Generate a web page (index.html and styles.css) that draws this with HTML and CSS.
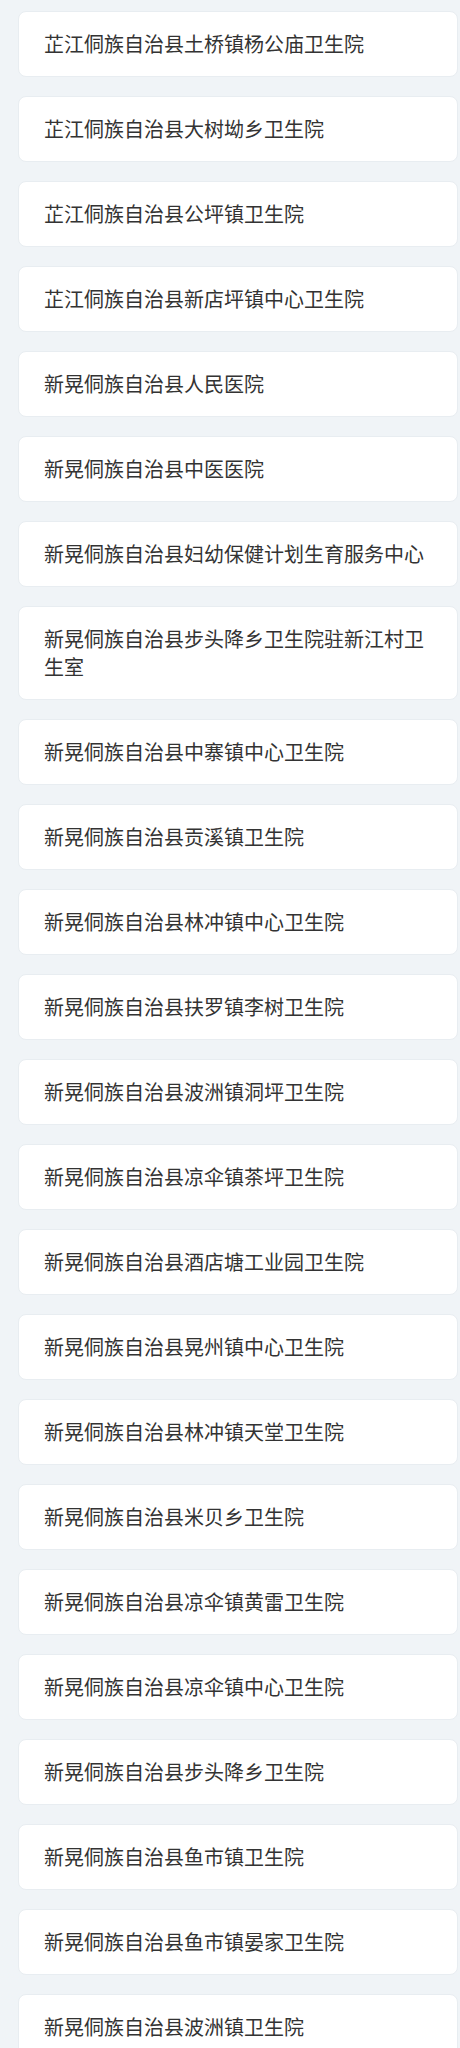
FILE: index.html
```html
<!DOCTYPE html>
<html lang="zh-CN">
<head>
<meta charset="utf-8">
<link rel="stylesheet" href="styles.css">
</head>
<body>
<ul class="list">
  <li class="card">芷江侗族自治县土桥镇杨公庙卫生院</li>
  <li class="card">芷江侗族自治县大树坳乡卫生院</li>
  <li class="card">芷江侗族自治县公坪镇卫生院</li>
  <li class="card">芷江侗族自治县新店坪镇中心卫生院</li>
  <li class="card">新晃侗族自治县人民医院</li>
  <li class="card">新晃侗族自治县中医医院</li>
  <li class="card">新晃侗族自治县妇幼保健计划生育服务中心</li>
  <li class="card">新晃侗族自治县步头降乡卫生院驻新江村卫生室</li>
  <li class="card">新晃侗族自治县中寨镇中心卫生院</li>
  <li class="card">新晃侗族自治县贡溪镇卫生院</li>
  <li class="card">新晃侗族自治县林冲镇中心卫生院</li>
  <li class="card">新晃侗族自治县扶罗镇李树卫生院</li>
  <li class="card">新晃侗族自治县波洲镇洞坪卫生院</li>
  <li class="card">新晃侗族自治县凉伞镇茶坪卫生院</li>
  <li class="card">新晃侗族自治县酒店塘工业园卫生院</li>
  <li class="card">新晃侗族自治县晃州镇中心卫生院</li>
  <li class="card">新晃侗族自治县林冲镇天堂卫生院</li>
  <li class="card">新晃侗族自治县米贝乡卫生院</li>
  <li class="card">新晃侗族自治县凉伞镇黄雷卫生院</li>
  <li class="card">新晃侗族自治县凉伞镇中心卫生院</li>
  <li class="card">新晃侗族自治县步头降乡卫生院</li>
  <li class="card">新晃侗族自治县鱼市镇卫生院</li>
  <li class="card">新晃侗族自治县鱼市镇晏家卫生院</li>
  <li class="card">新晃侗族自治县波洲镇卫生院</li>
</ul>
</body>
</html>
```
FILE: styles.css
```css
html, body {
  margin: 0;
  padding: 0;
  background: #f0f4f7;
}
body {
  font-family: "Noto Sans CJK SC", "Noto Sans", sans-serif;
  color: #333333;
}
.list {
  list-style: none;
  margin: 0;
  padding: 11px 2px 0 18px;
  display: flex;
  flex-direction: column;
  gap: 19px;
}
.card {
  background: #ffffff;
  border: 1px solid #e8edf1;
  border-radius: 8px;
  padding: 18px 25px;
  font-size: 20px;
  line-height: 28px;
}
```
